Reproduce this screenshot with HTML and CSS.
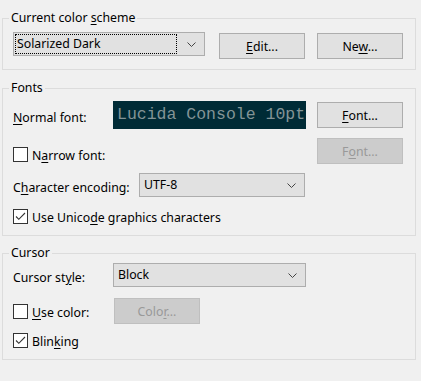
FILE: index.html
```html
<!DOCTYPE html>
<html lang="en">
<head>
    <meta charset="UTF-8">
    <title>Options</title>
    <link rel="stylesheet" href="styles.css">
</head>
<body>
<div class="page">
    <fieldset class="group scheme">
        <legend>Current color <u>s</u>cheme</legend>
        <div class="row">
            <div class="combo combo-scheme">
                <span class="combo-value focus">Solarized Dark</span>
                <span class="combo-arrow"><svg width="9" height="5" viewBox="0 0 9 5"><path d="M0.5 0.5 L4.5 4.5 L8.5 0.5" fill="none" stroke="#444" stroke-width="1"/></svg></span>
            </div>
            <button class="btn btn-edit"><u>E</u>dit...</button>
            <button class="btn btn-new">Ne<u>w</u>...</button>
        </div>
    </fieldset>

    <fieldset class="group fonts">
        <legend>Fonts</legend>
        <div class="row row-normal">
            <span class="label label-wide"><u>N</u>ormal font:</span>
            <div class="preview">Lucida Console 10pt</div>
            <button class="btn btn-right"><u>F</u>ont...</button>
        </div>
        <div class="row row-narrow">
            <span class="checkline narrow"><span class="check"></span><span class="check-text">N<u>a</u>rrow font:</span></span>
            <button class="btn btn-right" disabled>F<u>o</u>nt...</button>
        </div>
        <div class="row row-encoding">
            <span class="label label-enc">C<u>h</u>aracter encoding:</span>
            <div class="combo combo-enc">
                <span class="combo-value">UTF-8</span>
                <span class="combo-arrow"><svg width="9" height="5" viewBox="0 0 9 5"><path d="M0.5 0.5 L4.5 4.5 L8.5 0.5" fill="none" stroke="#444" stroke-width="1"/></svg></span>
            </div>
        </div>
        <div class="row row-unicode">
            <span class="checkline"><span class="check"><svg width="13" height="13" viewBox="0 0 13 13"><path d="M2 6.5 L4.8 9.3 L11 3" fill="none" stroke="#333" stroke-width="1.1"/></svg></span><span class="check-text">Use Unico<u>d</u>e graphics characters</span></span>
        </div>
    </fieldset>

    <fieldset class="group cursor">
        <legend>Cursor</legend>
        <div class="row row-style">
            <span class="label label-wide">Cursor st<u>y</u>le:</span>
            <div class="combo combo-style">
                <span class="combo-value">Block</span>
                <span class="combo-arrow"><svg width="9" height="5" viewBox="0 0 9 5"><path d="M0.5 0.5 L4.5 4.5 L8.5 0.5" fill="none" stroke="#444" stroke-width="1"/></svg></span>
            </div>
        </div>
        <div class="row row-color">
            <span class="checkline usecolor"><span class="check"></span><span class="check-text"><u>U</u>se color:</span></span>
            <button class="btn" disabled>Colo<u>r</u>...</button>
        </div>
        <div class="row row-blink">
            <span class="checkline"><span class="check"><svg width="13" height="13" viewBox="0 0 13 13"><path d="M2 6.5 L4.8 9.3 L11 3" fill="none" stroke="#333" stroke-width="1.1"/></svg></span><span class="check-text">Blin<u>k</u>ing</span></span>
        </div>
    </fieldset>
</div>
</body>
</html>
```

FILE: styles.css
```css
body {
    margin: 0;
    background-color: #f0f0f0;
    color: #000;
    font-family: "Noto Sans", sans-serif;
    font-size: 12.3px;
    line-height: 16px;
}
.page {
    padding: 10px 5px 0 2px;
}
.group {
    margin: 0;
    min-width: 0;
    border: 1px solid #dcdcdc;
    padding: 6px 12px 10px 10px;
}
.group legend {
    margin-left: -4px;
    padding: 0 2px;
    line-height: 16px;
}
.fonts {
    margin-top: 10px;
    padding-top: 5px;
}
.cursor {
    margin-top: 9px;
    padding-top: 2px;
}
.row {
    display: flex;
    align-items: center;
}
.scheme .row {
    align-items: flex-start;
}
u {
    text-decoration-thickness: 1px;
    text-underline-offset: 2px;
}

/* buttons */
.btn {
    box-sizing: border-box;
    width: 86px;
    height: 26px;
    margin: 0;
    padding: 0;
    background-color: #e1e1e1;
    border: 1px solid #adadad;
    font-family: inherit;
    font-size: 12.3px;
    color: #000;
}
.btn:disabled {
    background-color: #cccccc;
    border-color: #bfbfbf;
    color: #999;
}
.btn-edit {
    margin-top: 1px;
    margin-left: 14px;
}
.btn-new {
    margin-top: 1px;
    margin-left: 12px;
}
.btn-right {
    margin-left: auto;
}

/* combo boxes */
.combo {
    box-sizing: border-box;
    display: flex;
    height: 24px;
    padding: 1px;
    background-color: #e1e1e1;
    border: 1px solid #adadad;
}
.combo-value {
    flex: 1;
    padding-left: 3px;
    line-height: 20px;
}
.combo-value.focus {
    border: 1px dotted #000;
    padding-left: 1px;
    line-height: 18px;
}
.combo-arrow {
    width: 23px;
    display: flex;
    align-items: center;
    justify-content: center;
    padding-left: 3px;
}
.combo-scheme {
    width: 192px;
}
.combo-enc {
    width: 166px;
}
.combo-style {
    width: 193px;
}

/* labels */
.label {
    margin-top: 5px;
}
.label-wide {
    width: 100px;
    flex-shrink: 0;
}
.label-enc {
    width: 126px;
    flex-shrink: 0;
}
.preview {
    box-sizing: border-box;
    width: 193px;
    height: 28px;
    padding-left: 4px;
    background-color: #002b36;
    color: #839496;
    font-family: "Liberation Mono", monospace;
    font-size: 16.5px;
    line-height: 28px;
    white-space: nowrap;
    overflow: hidden;
}

/* checkboxes */
.checkline {
    display: flex;
    align-items: flex-start;
    gap: 4px;
}
.check-text {
    padding-top: 1px;
}
.check {
    box-sizing: border-box;
    width: 15px;
    height: 15px;
    background-color: #fff;
    border: 1px solid #333;
    display: flex;
    align-items: center;
    justify-content: center;
}
.row-normal {
    height: 28px;
}
.row-narrow {
    margin-top: 9px;
    height: 26px;
    align-items: flex-start;
}
.narrow {
    margin-top: 9px;
}
.row-encoding {
    margin-top: 9px;
}
.row-unicode {
    margin-top: 12px;
    height: 16px;
    align-items: flex-start;
}
.row-color {
    margin-top: 11px;
    height: 26px;
    align-items: flex-start;
}
.usecolor {
    width: 101px;
    margin-top: 6px;
}
.row-blink {
    margin-top: 9px;
    height: 16px;
    align-items: flex-start;
}
```
